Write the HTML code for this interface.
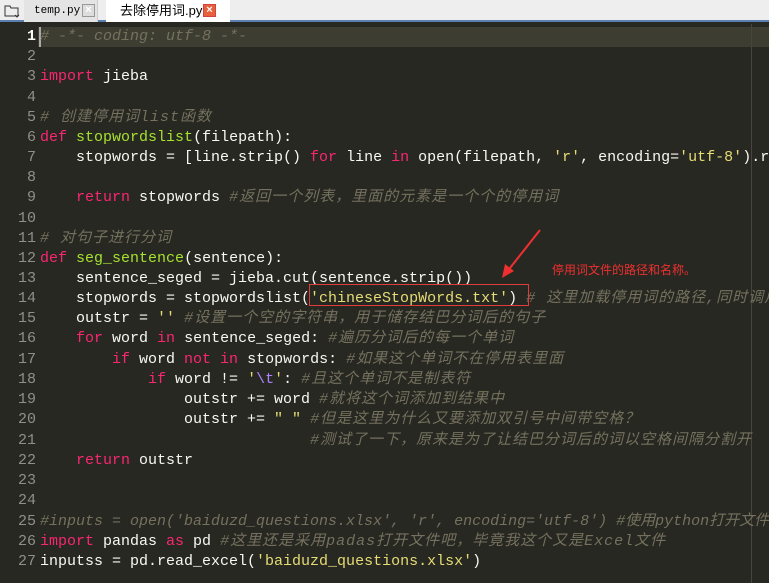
<!DOCTYPE html>
<html><head><meta charset="utf-8"><style>
*{margin:0;padding:0;box-sizing:border-box}
html,body{overflow:hidden}
body{width:769px;height:583px;overflow:hidden;background:#272822;position:relative;font-family:"Liberation Mono","Noto Sans CJK SC",monospace}
#tabs{position:absolute;left:0;top:0;width:769px;height:22px;background:#eeeeee;border-bottom:2px solid #5a7fb0}
.tab{position:absolute;top:0;height:22px;font-size:12px;line-height:22px;color:#000}
.x{position:absolute;top:4px;width:13px;height:13px;border:1px solid #999;background:#ddd;color:#fff;font:bold 11px/11px "Liberation Sans",sans-serif;text-align:center}
#ed{position:absolute;left:0;top:24px;width:769px;height:559px;overflow:hidden}
.ln{position:absolute;left:0;width:36px;text-align:right;color:#8f908a;font-size:15px;height:20px;line-height:20px}
.cd{position:absolute;left:40px;white-space:pre;font-size:15px;color:#f8f8f2;height:20px;line-height:20px}
.k{color:#f92672}.f{color:#a6e22e}.s{color:#e6db74}.c{color:#75715e;font-style:italic}.n{color:#ae81ff}
.z{letter-spacing:1px}
</style></head><body>
<div id="tabs">
<svg style="position:absolute;left:4px;top:4px" width="16" height="14" viewBox="0 0 16 14"><path d="M1 2h5l1 2h7v8H1z" fill="none" stroke="#333"/><path d="M11 11l2 2 2-2" fill="none" stroke="#333"/></svg>
<div class="tab" style="left:24px;width:74px;background:#e4e4e4;border-right:1px solid #ccc"><span style="position:absolute;left:10px;font-size:11px">temp.py</span><div class="x" style="left:58px">×</div></div>
<div class="tab" style="left:106px;width:124px;background:#fff"><span style="position:absolute;left:14px;font-family:'Liberation Sans','Noto Sans CJK SC',sans-serif;font-size:13px">去除停用词.py</span><div class="x" style="left:97px;background:#e8603c;border-color:#c44">×</div></div>
</div>
<div id="ed">
<div style="position:absolute;left:38px;top:3px;width:731px;height:20px;background:#3e3d32"></div>
<div style="position:absolute;left:39px;top:3px;width:2px;height:20px;background:#aaa"></div>
<div style="position:absolute;left:751px;top:0;width:1px;height:559px;background:#46463e"></div>
<div class="ln" style="top:3px;color:#f8f8f2;font-weight:bold">1</div><div class="cd c" style="top:3px"># -*- coding: utf-8 -*-</div>
<div class="ln" style="top:23px">2</div>
<div class="ln" style="top:43px">3</div><div class="cd" style="top:43px"><span class="k">import</span> jieba</div>
<div class="ln" style="top:64px">4</div>
<div class="ln" style="top:84px">5</div><div class="cd c z" style="top:84px"># 创建停用词list函数</div>
<div class="ln" style="top:104px">6</div><div class="cd" style="top:104px"><span class="k">def</span> <span class="f">stopwordslist</span>(filepath):</div>
<div class="ln" style="top:124px">7</div><div class="cd" style="top:124px">    stopwords = [line.strip() <span class="k">for</span> line <span class="k">in</span> open(filepath, <span class="s">'r'</span>, encoding=<span class="s">'utf-8'</span>).readlines()]</div>
<div class="ln" style="top:144px">8</div>
<div class="ln" style="top:164px">9</div><div class="cd" style="top:164px">    <span class="k">return</span> stopwords <span class="c z">#返回一个列表，里面的元素是一个个的停用词</span></div>
<div class="ln" style="top:185px">10</div>
<div class="ln" style="top:205px">11</div><div class="cd c z" style="top:205px"># 对句子进行分词</div>
<div class="ln" style="top:225px">12</div><div class="cd" style="top:225px"><span class="k">def</span> <span class="f">seg_sentence</span>(sentence):</div>
<div class="ln" style="top:245px">13</div><div class="cd" style="top:245px">    sentence_seged = jieba.cut(sentence.strip())</div>
<div class="ln" style="top:265px">14</div><div class="cd" style="top:265px">    stopwords = stopwordslist(<span class="s">'chineseStopWords.txt'</span>) <span class="c z"># 这里加载停用词的路径,同时调用</span></div>
<div class="ln" style="top:285px">15</div><div class="cd" style="top:285px">    outstr = <span class="s">''</span> <span class="c z">#设置一个空的字符串，用于储存结巴分词后的句子</span></div>
<div class="ln" style="top:305px">16</div><div class="cd" style="top:305px">    <span class="k">for</span> word <span class="k">in</span> sentence_seged: <span class="c z">#遍历分词后的每一个单词</span></div>
<div class="ln" style="top:326px">17</div><div class="cd" style="top:326px">        <span class="k">if</span> word <span class="k">not in</span> stopwords: <span class="c z">#如果这个单词不在停用表里面</span></div>
<div class="ln" style="top:346px">18</div><div class="cd" style="top:346px">            <span class="k">if</span> word != <span class="s">'<span class="n">\t</span>'</span>: <span class="c z">#且这个单词不是制表符</span></div>
<div class="ln" style="top:366px">19</div><div class="cd" style="top:366px">                outstr += word <span class="c z">#就将这个词添加到结果中</span></div>
<div class="ln" style="top:386px">20</div><div class="cd" style="top:386px">                outstr += <span class="s">" "</span> <span class="c z">#但是这里为什么又要添加双引号中间带空格？</span></div>
<div class="ln" style="top:407px">21</div><div class="cd" style="top:407px">                              <span class="c z">#测试了一下，原来是为了让结巴分词后的词以空格间隔分割开</span></div>
<div class="ln" style="top:427px">22</div><div class="cd" style="top:427px">    <span class="k">return</span> outstr</div>
<div class="ln" style="top:447px">23</div>
<div class="ln" style="top:467px">24</div>
<div class="ln" style="top:488px">25</div><div class="cd c" style="top:488px">#inputs = open('baiduzd_questions.xlsx', 'r', encoding='utf-8') #使用python打开文件</div>
<div class="ln" style="top:508px">26</div><div class="cd" style="top:508px"><span class="k">import</span> pandas <span class="k">as</span> pd <span class="c z">#这里还是采用padas打开文件吧，毕竟我这个又是Excel文件</span></div>
<div class="ln" style="top:528px">27</div><div class="cd" style="top:528px">inputss = pd.read_excel(<span class="s">'baiduzd_questions.xlsx'</span>)</div>
</div>
<div style="position:absolute;left:309px;top:284px;width:220px;height:22px;border:1px solid #e03c3c"></div>
<svg style="position:absolute;left:0;top:0" width="769" height="583"><line x1="540" y1="230" x2="510" y2="268" stroke="#f03030" stroke-width="2"/><path d="M502 278l3-14 9 7z" fill="#f03030"/></svg>
<div style="position:absolute;left:552px;top:262px;font:12px/16px 'Liberation Sans','Noto Sans CJK SC',sans-serif;color:#f03030">停用词文件的路径和名称。</div>
</body></html>
